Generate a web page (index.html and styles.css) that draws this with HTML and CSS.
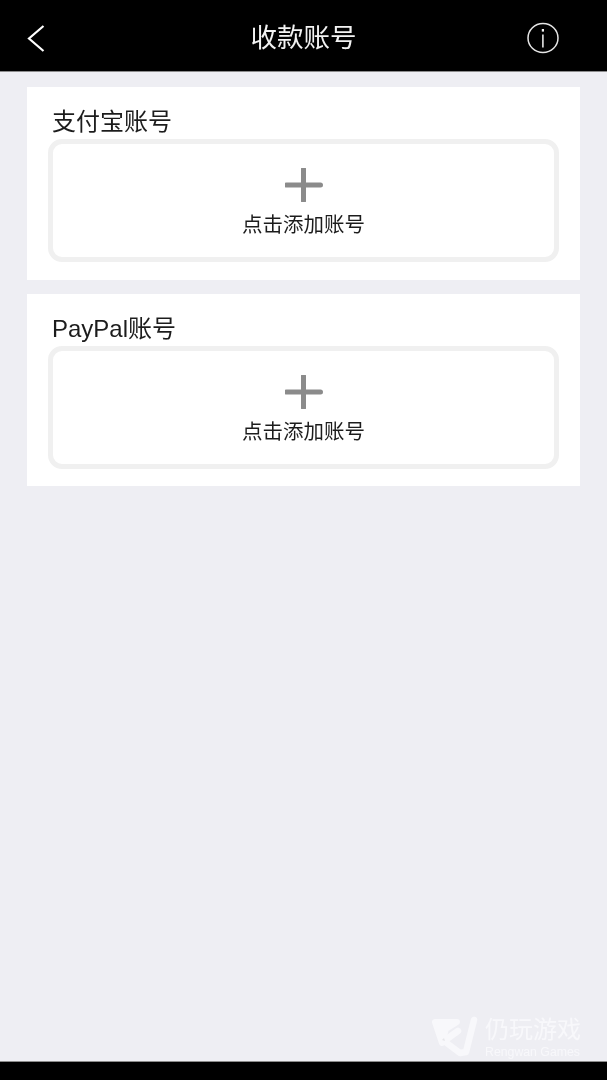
FILE: index.html
```html
<!DOCTYPE html>
<html lang="zh">
<head>
<meta charset="utf-8">
<title>收款账号</title>
<link rel="stylesheet" href="styles.css">
</head>
<body>
<div class="screen">
  <header class="topbar">
    <svg class="back" width="18" height="27" viewBox="0 0 18 27"><path d="M16.5 1 L2 13.5 L16.5 26" fill="none" stroke="#fff" stroke-width="2.2"/></svg>
    <h1 class="title">收款账号</h1>
    <svg class="info" width="32" height="32" viewBox="0 0 32 32"><ellipse cx="16" cy="16" rx="15" ry="14.6" fill="none" stroke="#e6e6e6" stroke-width="1.5"/><rect x="15.1" y="12.5" width="1.6" height="13" fill="#e6e6e6"/><rect x="14.8" y="7" width="2.2" height="2.6" fill="#f4f4f4"/></svg>
  </header>
  <main class="content">
    <section class="card">
      <h2 class="card-title">支付宝账号</h2>
      <div class="add-box">
        <svg class="plus" width="38" height="34" viewBox="0 0 38 34"><path d="M1.5 17 H35.5 M18.5 1 V33" stroke="#8b8b8b" stroke-width="5" stroke-linecap="round"/></svg>
        <div class="add-text">点击添加账号</div>
      </div>
    </section>
    <section class="card">
      <h2 class="card-title">PayPal账号</h2>
      <div class="add-box">
        <svg class="plus" width="38" height="34" viewBox="0 0 38 34"><path d="M1.5 17 H35.5 M18.5 1 V33" stroke="#8b8b8b" stroke-width="5" stroke-linecap="round"/></svg>
        <div class="add-text">点击添加账号</div>
      </div>
    </section>
  </main>
  <div class="watermark">
    <svg class="wm-logo" width="46" height="42" viewBox="0 0 46 42"><path d="M3 6 H25 L14 13 L10 27 Z" fill="#f8f8fb" stroke="#f8f8fb" stroke-width="6" stroke-linejoin="round"/><path d="M26 15 L12 25 L28 37 L34 36 L42 4" fill="none" stroke="#f8f8fb" stroke-width="6.5" stroke-linejoin="round" stroke-linecap="round"/><path d="M10 24 l2 -2 l1 3 z" fill="#e6e6ea"/></svg>
    <div class="wm-text">
      <div class="wm-cn">仍玩游戏</div>
      <div class="wm-en">Rengwan Games</div>
    </div>
  </div>
  <div class="bottombar"></div>
</div>
</body>
</html>
```
FILE: styles.css
```css
* { box-sizing: border-box; }
html, body { margin: 0; padding: 0; }
body { font-family: "Liberation Sans", "Noto Sans CJK SC", sans-serif; background: #eeeef3; }
.screen { position: relative; width: 607px; height: 1080px; display: flex; flex-direction: column; overflow: hidden; background: #eeeef3; filter: blur(0.35px); }
.topbar { height: 72px; flex: none; background: #000; border-bottom: 1px solid #8c8c8c; display: flex; align-items: center; justify-content: center; position: relative; }
.title { margin: 0; font-size: 26.5px; font-weight: 400; color: #f2f2f2; line-height: 1; position: relative; top: 3px; }
.back { position: absolute; left: 27px; top: 25px; }
.info { position: absolute; left: 527px; top: 22px; }
.content { flex: 1; padding: 15px 27px 0; display: flex; flex-direction: column; gap: 14px; }
.card { height: 192.5px; background: #fff; padding: 21px 21px 0; }
.card-title { margin: 0 0 0 4px; font-size: 24px; font-weight: 400; line-height: 30px; color: #1c1c1c; height: 31px; position: relative; top: -1px; }
.add-box { height: 123px; border: 5px solid #f0f0f0; border-radius: 14px; display: flex; flex-direction: column; align-items: center; padding-top: 24px; }
.plus { display: block; }
.add-text { margin-top: 10px; font-size: 20.5px; font-weight: 400; line-height: 26px; color: #1c1c1c; }
.bottombar { height: 19px; flex: none; background: #000; border-top: 1px solid #8c8c8c; }
.watermark { position: absolute; left: 432px; top: 1016px; display: flex; gap: 7px; }
.wm-logo { margin-top: 0; }
.wm-text { color: #f8f8fb; }
.wm-cn { font-size: 24px; font-weight: 400; line-height: 28px; }
.wm-en { font-size: 12.3px; line-height: 14px; margin-top: 1px; }
```
